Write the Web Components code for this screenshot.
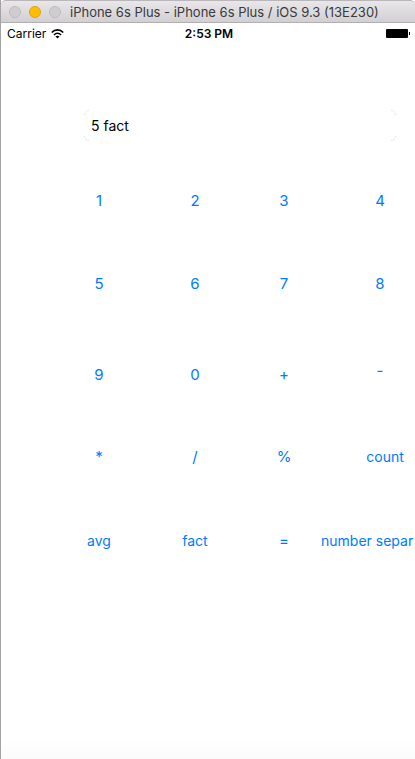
<!DOCTYPE html>
<html lang="en">
<head>
<meta charset="utf-8">
<title>iPhone 6s Plus</title>
<style>
html, body { margin: 0; min-height: 100vh; background: #fff; }
body { display: flex; font-family: Inter, "Liberation Sans", sans-serif; }
</style>
</head>
<body>
<simulator-window></simulator-window>
<script>
const define = (name, html) => customElements.define(name, class extends HTMLElement {
  constructor() {
    super();
    const t = document.createElement('template');
    t.innerHTML = html;
    this.attachShadow({ mode: 'open' }).append(t.content.cloneNode(true));
  }
});

define('title-bar', `
<style>
:host { display: flex; box-sizing: border-box; height: 23px; align-items: center; gap: 8px; padding: 1px 8px 0;
  border-top: 1px solid #b9b7ba; border-bottom: 1px solid #b1afb1; border-radius: 5px 5px 0 0;
  background: linear-gradient(#e9e7e9, #d1cfd1); color: #3a393b; }
button { flex: none; box-sizing: border-box; width: 12px; height: 12px; padding: 0; border: 1px solid #bebcbe; border-radius: 50%; background: #cfcdcf; }
.min { background: #ffbd05; border-color: #e3a20b; }
h1 { margin: 0 0 0 1px; font-size: 13px; line-height: 18px; font-weight: 400; white-space: nowrap; }
</style>
<button aria-label="Close"></button><button class="min" aria-label="Minimize"></button><button aria-label="Zoom"></button>
<h1><slot></slot></h1>`);

define('status-bar', `
<style>
:host { display: grid; grid-template-columns: 1fr auto 1fr; align-items: center; height: 21px; padding: 0 5px 0 6px; font-size: 12px; line-height: 16px; color: #000; }
.left { display: flex; align-items: center; gap: 5px; }
time { font-weight: 600; padding-left: 1px; }
.battery { justify-self: end; }
svg { display: block; }
</style>
<div class="left"><span>Carrier</span>
<svg width="13" height="10" viewBox="0 0 13 10" fill="none" stroke="#000" stroke-width="1.6"><path d="M.8 3.6C4-.1 9-.1 12.200 3.600M3 5.900c2-2.300 5-2.300 7 0"/><path d="M6.500 9.500 4.500 7.400c1.200-1 2.800-1 4 0z" fill="#000" stroke="none"/></svg></div>
<time>2:53 PM</time>
<svg class="battery" width="24" height="10" viewBox="0 0 24 10"><rect x="0" y="0" width="22" height="9" rx="1"/><path d="M23 3h1v3h-1z"/></svg>`);

define('result-field', `
<style>
:host { display: block; border-radius: 6px; background:
  radial-gradient(circle at 100% 100%, transparent 4px, #bbb 5px, transparent 6px) 0 0 / 5px 5px no-repeat,
  radial-gradient(circle at 0 100%, transparent 4px, #bbb 5px, transparent 6px) 100% 0 / 5px 5px no-repeat,
  radial-gradient(circle at 100% 0, transparent 4px, #bbb 5px, transparent 6px) 0 100% / 5px 5px no-repeat,
  radial-gradient(circle at 0 0, transparent 4px, #bbb 5px, transparent 6px) 100% 100% / 5px 5px no-repeat; }
input { display: block; box-sizing: border-box; width: 100%; height: 31px; padding: 0 6px; border: 1px solid transparent; border-radius: 6px; outline: 0; background: none; font: 14px/20px Inter, "Liberation Sans", sans-serif; color: #000; }
</style>
<input type="text" value="5 fact" aria-label="Expression">`);

define('calc-key', `
<style>
:host { display: grid; place-items: center; font-size: 15px; }
:host([word]) { font-size: 14px; }
:host([raised]) { padding-bottom: 8px; }
:host([wide]) { padding-left: 10px; }
:host([start]) { place-items: center start; }
button { padding: 0; border: 0; background: none; color: #007aff; font-family: inherit; font-size: inherit; line-height: 20px; white-space: nowrap; cursor: pointer; }
</style>
<button type="button"><slot></slot></button>`);

define('key-pad', `
<style>
:host { display: grid; grid-template-columns: 88fr 104fr 74fr 118fr; grid-template-rows: 82px 84px 98px 66px 102px; margin: 19px -24px 0 54px; }
</style>
<slot></slot>`);

define('simulator-window', `
<style>
:host { display: flex; flex-direction: column; flex: 1; min-width: 0; min-height: 100vh; box-sizing: border-box; overflow: hidden; border-left: 1px solid #a3a3a3; background: linear-gradient(#fff calc(100% - 20px), #fbfbfb); }
result-field { margin: 66px 19px 0 83px; }
</style>
<title-bar>iPhone 6s Plus - iPhone 6s Plus / iOS 9.3 (13E230)</title-bar>
<status-bar></status-bar>
<result-field></result-field>
<key-pad>
<calc-key>1</calc-key><calc-key>2</calc-key><calc-key>3</calc-key><calc-key>4</calc-key>
<calc-key>5</calc-key><calc-key>6</calc-key><calc-key>7</calc-key><calc-key>8</calc-key>
<calc-key>9</calc-key><calc-key>0</calc-key><calc-key>+</calc-key><calc-key raised>-</calc-key>
<calc-key>*</calc-key><calc-key>/</calc-key><calc-key>%</calc-key><calc-key word wide>count</calc-key>
<calc-key word>avg</calc-key><calc-key word>fact</calc-key><calc-key>=</calc-key><calc-key word start>number separ</calc-key>
</key-pad>`);
</script>
</body>
</html>
